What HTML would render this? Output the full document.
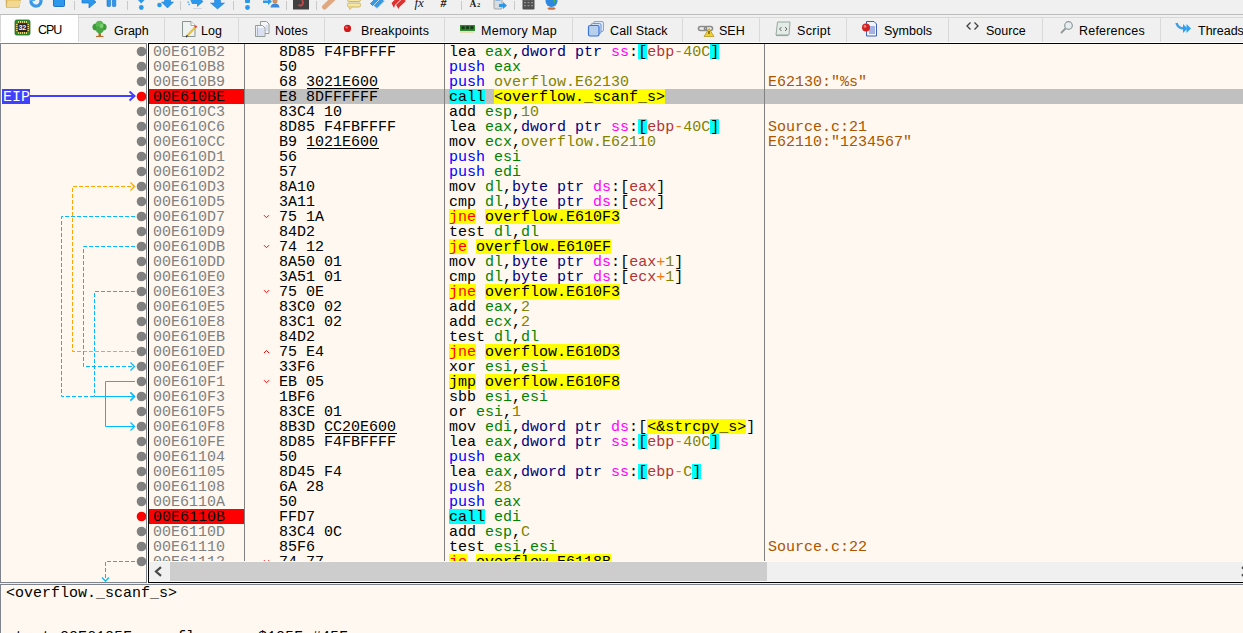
<!DOCTYPE html>
<html><head><meta charset="utf-8">
<style>
*{margin:0;padding:0;box-sizing:border-box}
html,body{width:1243px;height:633px;overflow:hidden;background:#F0F0F0;position:relative;font-family:"Liberation Sans",sans-serif}
.abs{position:absolute}
#tbline{position:absolute;left:0;top:14px;width:1243px;height:1px;background:#BDBDBD}
.sep{position:absolute;top:1px;width:1px;height:9px;background:#C9C9C9}
.tab{position:absolute;top:17px;height:25px;border-top:1px solid #D9D9D9;border-right:1px solid #D9D9D9;background:#F0F0F0;font-size:12.5px;line-height:15px;color:#000;white-space:nowrap}
.tab.cur{top:15px;height:27px;background:#fff;border-top:none;border-left:1px solid #D5D5D5}
.tab span.t{position:absolute;top:6px}
.tab.cur span.t{top:8px;margin-left:-1px}
#tabline{position:absolute;left:0;top:42px;width:1243px;height:1px;background:#fff}
#side{position:absolute;left:0;top:43px;width:147px;height:540px;border:1px solid #7F848C;background:#FFF8F0}
#gap{position:absolute;left:147px;top:43px;width:1px;height:540px;background:#FFFFFF}
#dis{position:absolute;left:148px;top:43px;width:1100px;height:540px;border:1px solid #000;background:#FFF8F0}
#rows{position:absolute;left:149px;top:44px;width:1094px;height:517px;overflow:hidden;font-family:"Liberation Mono",monospace;font-size:15px;line-height:15px;white-space:pre}
.row{position:absolute;left:0;width:1094px;height:15px}
.row.sel::before{content:"";position:absolute;left:96px;top:0;width:1000px;height:15px;background:#C0C0C0}
.bpbg{position:absolute;left:0;top:0;width:95px;height:15px;background:#FF0000}
.ad{position:absolute;left:4px;top:1px;color:#808080}
.by{position:absolute;left:130px;top:1px;color:#000}
.ja{position:absolute;left:114px;top:5px}
.ds{position:absolute;left:300px;top:1px}
.cm{position:absolute;left:619px;top:1px;color:#AA5500}
.bg{position:absolute;top:0;height:15px}
.ul{position:absolute;top:14px;height:1px;background:#000}
.u{text-decoration:underline;text-underline-offset:2px}
.colsep{position:absolute;top:0;width:1px;height:517px;background:#808080}
.m{color:#000}
.pp{color:#0000FF}
.rg{color:#008300}
.sz{color:#000080}
.sg{color:#FF00FF}
.sb{color:#000}
.bs{color:#B03434}
.op{color:#F27711}
.vl{color:#828200}
.cj{color:#FF0000}
.uj{color:#000}
.ad2{}
.ds .ad{position:static;color:#000}
.cl{color:#000}
.lb{color:#000}
#hscroll{position:absolute;left:149px;top:562px;width:1094px;height:19px;background:#F0F0F0}
#hthumb{position:absolute;left:170px;top:562px;width:597px;height:19px;background:#CDCDCD}
#info{position:absolute;left:0;top:584px;width:1250px;height:60px;border-left:1px solid #7F848C;border-top:1px solid #7F848C;background:#FFF8F0;font-family:"Liberation Mono",monospace;font-size:15px;line-height:15px;white-space:pre;color:#000}
#splitline{position:absolute;left:0;top:583px;width:1243px;height:1px;background:#F0F0F0}
</style></head><body>
<!-- toolbar -->
<div id="toolbar">
<svg class="abs" style="left:0;top:0" width="600" height="14" viewBox="0 0 600 14">
<g fill="#C9C9C9"><rect x="74" y="1" width="1" height="9"/><rect x="127" y="1" width="1" height="9"/><rect x="180" y="1" width="1" height="9"/><rect x="233" y="1" width="1" height="9"/><rect x="286" y="1" width="1" height="9"/><rect x="316" y="1" width="1" height="9"/><rect x="461" y="1" width="1" height="9"/><rect x="514" y="1" width="1" height="9"/></g>
<!-- folder -->
<path d="M6 -2 H20.5 L19 7.5 H6.5 Z" fill="#E8C870" stroke="#C8A048" stroke-width="0.8"/>
<path d="M8 1 H21 L19 7.5 H6.5 Z" fill="#F2D890"/>
<!-- restart -->
<path d="M31 0.5 A5 5 0 1 0 40.5 -1" stroke="#3A98E8" stroke-width="3.2" fill="none"/><circle cx="35.8" cy="2.2" r="1.8" fill="#F0F0F0"/>
<rect x="30" y="-2" width="5" height="3" fill="#50A8F0"/>
<!-- stop -->
<rect x="53.5" y="-5" width="11" height="11.5" rx="1" fill="#2C98EC" stroke="#1E70C8" stroke-width="1"/>
<!-- run -->
<path d="M82 -2 V3 H89 V8 L96 2 L89 -4 V-2 Z" fill="#2A98EC" stroke="#1E70C8" stroke-width="0.7"/>
<!-- pause -->
<rect x="107" y="-4" width="3.5" height="10.5" rx="0.8" fill="#2A98EC" stroke="#1E70C8" stroke-width="0.6"/>
<rect x="112.3" y="-4" width="3.5" height="10.5" rx="0.8" fill="#2A98EC" stroke="#1E70C8" stroke-width="0.6"/>
<!-- step into -->
<path d="M137 -1 H145.5 L141.2 3.5 Z" fill="#2A98EC"/>
<circle cx="141.3" cy="7.5" r="2.4" fill="#2A98EC"/>
<!-- step over -->
<circle cx="159.5" cy="5" r="2.3" fill="#2A98EC"/>
<path d="M164.5 -2 H170.5 V2 H173.5 L167.5 8 L161.5 2 H164.5 Z" fill="#2A98EC" stroke="#1E70C8" stroke-width="0.5"/>
<!-- trace into -->
<path d="M190 -1 H197 V-4 L203.5 1.5 L197 7 V4 H192 Z" fill="#2A98EC"/>
<g fill="#2A98EC"><rect x="187.5" y="1.5" width="1.3" height="1.3"/><rect x="188.5" y="3.8" width="1.3" height="1.3"/></g>
<path d="M193 8.5 H202" stroke="#B8C8D8" stroke-width="1" opacity="0.6"/>
<!-- arrow down -->
<path d="M214.5 -4 H220.5 V3 H224.5 L217.5 9 L210.5 3 H214.5 Z" fill="#2A98EC" stroke="#1E70C8" stroke-width="0.5"/>
<!-- ! -->
<rect x="245" y="-3" width="5" height="6" rx="1" fill="#2A98EC"/>
<circle cx="247.5" cy="7.5" r="2.4" fill="#2A98EC"/>
<!-- arrow + person -->
<path d="M263 0.5 H268 V-2 L272 1.5 L268 5 V3 H263 Z" fill="#2A98EC"/>
<circle cx="275" cy="1" r="2.5" fill="#C89068"/>
<path d="M270.5 7.5 Q271 3.5 275 3.5 Q279 3.5 279.5 7.5 Z" fill="#3A88D8"/>
<!-- dark S -->
<rect x="293" y="-6" width="16" height="15.5" fill="#404040"/>
<path d="M302 0 Q304 3 302 5 Q300 6.5 298.5 4.5" stroke="#C04848" stroke-width="1.8" fill="none"/>
<!-- bandage -->
<path d="M324.5 7 L336 -4" stroke="#E0A880" stroke-width="5" stroke-linecap="round"/>
<!-- comment bubbles -->
<rect x="347.5" y="-2" width="13" height="3.5" rx="1.5" fill="#F4E8A0" stroke="#C8A858" stroke-width="0.8"/>
<rect x="347.5" y="3" width="13" height="4" rx="1.5" fill="#F4E8A0" stroke="#C8A858" stroke-width="0.8"/>
<path d="M350 7 L349.5 9.5 L352.5 7" fill="#F4E8A0" stroke="#C8A858" stroke-width="0.7"/>
<!-- blue tags -->
<path d="M369.5 3.5 L377 -4 L380 -1 L372.5 6.5 Z" fill="#3898E0" stroke="#FFFFFF" stroke-width="0.8"/>
<path d="M373.5 5.5 L381 -2 L384.5 1 L377 8.5 Z" fill="#3898E0" stroke="#D0E0F0" stroke-width="0.8"/>
<!-- red tags -->
<path d="M391.5 3 L398 -3.5 L401 -1 L395 5 L394 8 Z" fill="#E03030"/>
<path d="M396 5 L402.5 -1.5 L406 1 L399.5 7 L398.5 9 Z" fill="#E03030"/>
<!-- fx -->
<text x="414.5" y="7.2" font-family="Liberation Serif" font-style="italic" font-size="13" fill="#1A1A1A">fx</text>
<!-- # -->
<text x="440.5" y="7" font-family="Liberation Serif" font-weight="bold" font-style="italic" font-size="12" fill="#1A1A1A">#</text>
<!-- A2 -->
<text x="469.5" y="6.6" font-family="Liberation Serif" font-weight="bold" font-size="9.5" fill="#1A1A1A">A</text>
<text x="477" y="6.6" font-family="Liberation Serif" font-weight="bold" font-size="6.5" fill="#1A1A1A">2</text>
<!-- phone arrow -->
<rect x="494" y="-5" width="8" height="14" rx="1" fill="#D8DCE0" stroke="#909498" stroke-width="0.8"/>
<rect x="495.5" y="-3" width="5" height="3.5" fill="#3A90E0"/>
<path d="M499 4 H503 V2 L507 5.5 L503 9 V7 H499 Z" fill="#2A98EC"/>
<!-- calculator -->
<rect x="522.5" y="-5" width="12" height="14.5" rx="1" fill="#505050"/>
<g fill="#909090"><rect x="524" y="-1" width="2" height="1.3"/><rect x="527.5" y="-1" width="2" height="1.3"/><rect x="531" y="-1" width="2" height="1.3"/>
<rect x="524" y="2" width="2" height="1.3"/><rect x="527.5" y="2" width="2" height="1.3"/><rect x="531" y="2" width="2" height="1.3"/>
<rect x="524" y="5" width="2" height="1.3"/><rect x="527.5" y="5" width="2" height="1.3"/><rect x="531" y="5" width="2" height="1.3"/></g>
<!-- globe -->
<circle cx="551.5" cy="1" r="6" fill="#2C88E0"/>
<path d="M553 -3 Q556 -1 555 3 Q553 2 553 -3 Z" fill="#40B040"/>
<ellipse cx="551.5" cy="8.5" rx="4" ry="1.3" fill="#C87040"/>
</svg>
</div>
<div id="tbline"></div>
<!-- tabs -->
<div class="tab cur" style="left:0px;width:79px"><span class="t" style="left:38px;letter-spacing:-1px">CPU</span></div>
<div class="tab" style="left:79px;width:86px"><span class="t" style="left:35px">Graph</span></div>
<div class="tab" style="left:165px;width:74px"><span class="t" style="left:36px">Log</span></div>
<div class="tab" style="left:239px;width:86px"><span class="t" style="left:36px">Notes</span></div>
<div class="tab" style="left:325px;width:120px"><span class="t" style="left:36px;letter-spacing:0.2px">Breakpoints</span></div>
<div class="tab" style="left:445px;width:128px"><span class="t" style="left:36px;letter-spacing:0.3px">Memory Map</span></div>
<div class="tab" style="left:573px;width:110px"><span class="t" style="left:37px;letter-spacing:0.15px">Call Stack</span></div>
<div class="tab" style="left:683px;width:77px"><span class="t" style="left:36px">SEH</span></div>
<div class="tab" style="left:760px;width:87px"><span class="t" style="left:37px;letter-spacing:0.3px">Script</span></div>
<div class="tab" style="left:847px;width:102px"><span class="t" style="left:37px">Symbols</span></div>
<div class="tab" style="left:949px;width:94px"><span class="t" style="left:37px">Source</span></div>
<div class="tab" style="left:1043px;width:118px"><span class="t" style="left:36px;letter-spacing:0.2px">References</span></div>
<div class="tab" style="left:1161px;width:140px"><span class="t" style="left:37px">Threads</span></div>

<svg class="abs" style="left:0;top:15px" width="1243" height="27" viewBox="0 15 1243 27">
<!-- CPU chip -->
<rect x="15" y="20" width="15" height="15" rx="1.5" fill="#2E8B2E" stroke="#1F6A1F" stroke-width="0.8"/>
<g fill="#E8D070"><rect x="18" y="21" width="1" height="2"/><rect x="20" y="21" width="1" height="2"/><rect x="22" y="21" width="1" height="2"/><rect x="24" y="21" width="1" height="2"/><rect x="26" y="21" width="1" height="2"/>
<rect x="18" y="32" width="1" height="2"/><rect x="20" y="32" width="1" height="2"/><rect x="22" y="32" width="1" height="2"/><rect x="24" y="32" width="1" height="2"/><rect x="26" y="32" width="1" height="2"/>
<rect x="16" y="24" width="2" height="1"/><rect x="16" y="26" width="2" height="1"/><rect x="16" y="28" width="2" height="1"/><rect x="16" y="30" width="2" height="1"/>
<rect x="27" y="24" width="2" height="1"/><rect x="27" y="26" width="2" height="1"/><rect x="27" y="28" width="2" height="1"/><rect x="27" y="30" width="2" height="1"/></g>
<rect x="17.8" y="23.2" width="9.6" height="8.8" rx="1.2" fill="#262626"/>
<text x="18.6" y="30.4" font-family="Liberation Sans" font-weight="bold" font-size="7.2" fill="#F4F4F4" letter-spacing="-0.3">32</text>
<!-- tree -->
<rect x="98.5" y="31" width="2.5" height="5" fill="#B07030"/>
<path d="M96 36.5 H103.5" stroke="#B07030" stroke-width="1.2"/>
<circle cx="96" cy="27" r="3.6" fill="#3E9A3A"/><circle cx="103" cy="27" r="3.6" fill="#3E9A3A"/><circle cx="99.5" cy="24.5" r="3.8" fill="#58B850"/><circle cx="99.8" cy="29.5" r="3.8" fill="#4AA844"/><circle cx="101.5" cy="26" r="2" fill="#7CD070"/>
<!-- log page + pencil -->
<path d="M182.5 21.5 H191 L195 25.5 V36.5 H182.5 Z" fill="#EEF3F2" stroke="#8A9590" stroke-width="1"/>
<path d="M191 21.5 V25.5 H195" fill="#fff" stroke="#8A9590" stroke-width="0.8"/>
<path d="M186.5 36.5 L195.5 27" stroke="#E8C040" stroke-width="2.2"/>
<path d="M195 27.5 L196.5 26" stroke="#E04040" stroke-width="2.2"/>
<path d="M186 37 L187.5 35.5" stroke="#222" stroke-width="1.2"/>
<!-- notes -->
<path d="M260.5 21.5 H266.5 L269 24 V33.5 H260.5 Z" fill="#F4F6FA" stroke="#8A9590" stroke-width="0.9"/>
<path d="M255.5 25.5 H262.5 L265 28 V36.5 H255.5 Z" fill="#F4F6FA" stroke="#8A9590" stroke-width="0.9"/>
<g stroke="#A8B8E0" stroke-width="0.7"><path d="M256.5 29 H264"/><path d="M256.5 31 H264"/><path d="M256.5 33 H264"/><path d="M256.5 35 H264"/><path d="M265.5 26 H268"/><path d="M265.5 28 H268"/><path d="M265.5 30 H268"/></g>
<path d="M257.5 26 V36" stroke="#E08080" stroke-width="0.6"/>
<!-- bp dot -->
<circle cx="347.5" cy="28.4" r="3.6" fill="#D01818"/>
<circle cx="346.6" cy="27.4" r="1.2" fill="#F07070"/>
<!-- memory map -->
<rect x="460" y="25" width="15" height="6" fill="#2E8B2E"/>
<rect x="461.5" y="26.2" width="3.2" height="3" fill="#1A3A1A"/><rect x="465.9" y="26.2" width="3.2" height="3" fill="#1A3A1A"/><rect x="470.3" y="26.2" width="3.2" height="3" fill="#1A3A1A"/>
<path d="M460.5 32 H474.5" stroke="#D8C060" stroke-width="1.6" stroke-dasharray="1 1"/>
<!-- call stack -->
<rect x="593.5" y="21.5" width="10" height="10" rx="1.5" fill="#DCE8F6" stroke="#88A8D8" stroke-width="1"/>
<rect x="591" y="23.5" width="10" height="10" rx="1.5" fill="#D0E0F4" stroke="#7098D0" stroke-width="1"/>
<rect x="588.5" y="25.5" width="10.5" height="10.5" rx="1.5" fill="#B8D0EE" stroke="#3C74D8" stroke-width="1.2"/>
<!-- SEH -->
<rect x="698.5" y="26.5" width="8" height="4" rx="2" fill="none" stroke="#8A8A8A" stroke-width="1.6"/>
<rect x="704.5" y="26.5" width="8" height="4" rx="2" fill="none" stroke="#8A8A8A" stroke-width="1.6"/>
<path d="M709 28.5 L714 36.5 H704 Z" fill="#F0D030" stroke="#B09020" stroke-width="0.7"/>
<path d="M709 31 V34" stroke="#222" stroke-width="1"/>
<!-- script -->
<path d="M777.5 22 H790 L789 35 H776 Z" fill="#E4ECE8" stroke="#98A8A0" stroke-width="1"/>
<path d="M776 35.5 H788" stroke="#98A8A0" stroke-width="1.2"/>
<path d="M781.5 27 L779.5 29 L781.5 31 M785 27 L787 29 L785 31" stroke="#555" stroke-width="0.9" fill="none"/>
<!-- symbols -->
<path d="M866.5 21.5 H874 L876.5 24 V36 H866.5 Z" fill="#F0F4FC" stroke="#4060B0" stroke-width="1"/>
<g stroke="#3050C0" stroke-width="0.8"><path d="M869 27 H875"/><path d="M869 29 H875"/><path d="M869 31 H875"/><path d="M869 33 H875"/></g>
<circle cx="866" cy="27.6" r="4" fill="#D02020"/><circle cx="865" cy="26.4" r="1.4" fill="#F08080"/>
<!-- source <> -->
<path d="M970.5 22.5 L967 26 L970.5 29.5 M974.5 22.5 L978 26 L974.5 29.5" stroke="#404040" stroke-width="1.3" fill="none"/>
<!-- references magnifier -->
<circle cx="1068.5" cy="25.5" r="3.8" fill="#E6EEF4" stroke="#909898" stroke-width="1.2"/>
<path d="M1065.5 28.5 L1061 33" stroke="#909898" stroke-width="1.8"/>
<!-- threads -->
<path d="M1176.5 23 Q1178 28.5 1184 28.5" stroke="#40A0E8" stroke-width="2.6" fill="none"/>
<path d="M1183 24 L1187.5 28.5 L1183 33 Z" fill="#30A0F0"/>
<path d="M1186.5 24 L1191 28.5 L1186.5 33 Z" fill="#30A0F0"/>
</svg>

<div id="tabline"></div>
<!-- side bar -->
<div id="side"></div>
<div id="gap"></div>
<svg class="abs" style="left:0;top:0" width="147" height="583" viewBox="0 0 147 583">
<defs><clipPath id="sc"><rect x="1" y="44" width="145" height="538"/></clipPath></defs>
<g clip-path="url(#sc)">
<path d="M135 351.5 H72.5 V186.5 H135" stroke="#FFA500" stroke-width="1" fill="none" stroke-dasharray="4 2"/>
<path d="M130.5 182.5 L134.5 186.5 L130.5 190.5" stroke="#FFA500" stroke-width="1.3" fill="none"/>
<path d="M135 216.5 H61.5 V396.5 H135" stroke="#00BBFF" stroke-width="1" fill="none" stroke-dasharray="4 2"/>
<path d="M130.5 392.5 L134.5 396.5 L130.5 400.5" stroke="#00BBFF" stroke-width="1.3" fill="none"/>
<path d="M135 246.5 H83.5 V366.5 H135" stroke="#00BBFF" stroke-width="1" fill="none" stroke-dasharray="4 2"/>
<path d="M130.5 362.5 L134.5 366.5 L130.5 370.5" stroke="#00BBFF" stroke-width="1.3" fill="none"/>
<path d="M135 291.5 H94.5 V396.5 H135" stroke="#00BBFF" stroke-width="1" fill="none" stroke-dasharray="4 2"/>
<path d="M130.5 392.5 L134.5 396.5 L130.5 400.5" stroke="#00BBFF" stroke-width="1.3" fill="none"/>
<path d="M135 381.5 H105.5 V426.5 H135" stroke="#00BBFF" stroke-width="1" fill="none"/>
<path d="M130.5 422.5 L134.5 426.5 L130.5 430.5" stroke="#00BBFF" stroke-width="1.3" fill="none"/>
<path d="M135 561.5 H105.5 V581" stroke="#00BBFF" stroke-width="1" fill="none" stroke-dasharray="4 2"/>
<path d="M102 577.5 L105.5 581 L109 577.5" stroke="#00BBFF" stroke-width="1.3" fill="none"/>
<rect x="2" y="89" width="28" height="15" fill="#4040FF"/>
<text x="3" y="101" font-family="Liberation Mono" font-size="15" fill="#fff">EIP</text>
<path d="M30 96 H134" stroke="#4040FF" stroke-width="2" fill="none"/>
<path d="M129.5 91.5 L134.5 96 L129.5 100.5" stroke="#4040FF" stroke-width="2" fill="none"/>
<circle cx="141.5" cy="51.5" r="4.8" fill="#808080"/>
<circle cx="141.5" cy="66.5" r="4.8" fill="#808080"/>
<circle cx="141.5" cy="81.5" r="4.8" fill="#808080"/>
<circle cx="141.5" cy="96.5" r="4.8" fill="#ff0000"/>
<circle cx="141.5" cy="111.5" r="4.8" fill="#808080"/>
<circle cx="141.5" cy="126.5" r="4.8" fill="#808080"/>
<circle cx="141.5" cy="141.5" r="4.8" fill="#808080"/>
<circle cx="141.5" cy="156.5" r="4.8" fill="#808080"/>
<circle cx="141.5" cy="171.5" r="4.8" fill="#808080"/>
<circle cx="141.5" cy="186.5" r="4.8" fill="#808080"/>
<circle cx="141.5" cy="201.5" r="4.8" fill="#808080"/>
<circle cx="141.5" cy="216.5" r="4.8" fill="#808080"/>
<circle cx="141.5" cy="231.5" r="4.8" fill="#808080"/>
<circle cx="141.5" cy="246.5" r="4.8" fill="#808080"/>
<circle cx="141.5" cy="261.5" r="4.8" fill="#808080"/>
<circle cx="141.5" cy="276.5" r="4.8" fill="#808080"/>
<circle cx="141.5" cy="291.5" r="4.8" fill="#808080"/>
<circle cx="141.5" cy="306.5" r="4.8" fill="#808080"/>
<circle cx="141.5" cy="321.5" r="4.8" fill="#808080"/>
<circle cx="141.5" cy="336.5" r="4.8" fill="#808080"/>
<circle cx="141.5" cy="351.5" r="4.8" fill="#808080"/>
<circle cx="141.5" cy="366.5" r="4.8" fill="#808080"/>
<circle cx="141.5" cy="381.5" r="4.8" fill="#808080"/>
<circle cx="141.5" cy="396.5" r="4.8" fill="#808080"/>
<circle cx="141.5" cy="411.5" r="4.8" fill="#808080"/>
<circle cx="141.5" cy="426.5" r="4.8" fill="#808080"/>
<circle cx="141.5" cy="441.5" r="4.8" fill="#808080"/>
<circle cx="141.5" cy="456.5" r="4.8" fill="#808080"/>
<circle cx="141.5" cy="471.5" r="4.8" fill="#808080"/>
<circle cx="141.5" cy="486.5" r="4.8" fill="#808080"/>
<circle cx="141.5" cy="501.5" r="4.8" fill="#808080"/>
<circle cx="141.5" cy="516.5" r="4.8" fill="#ff0000"/>
<circle cx="141.5" cy="531.5" r="4.8" fill="#808080"/>
<circle cx="141.5" cy="546.5" r="4.8" fill="#808080"/>
<circle cx="141.5" cy="561.5" r="4.8" fill="#808080"/>
</g>
</svg>
<!-- disasm -->
<div id="dis"></div>
<div id="rows">
<div class="row" style="top:0px"><div class="bg" style="left:489px;width:9px;background:#00FFFF"></div><div class="bg" style="left:561px;width:9px;background:#00FFFF"></div><div class="ad" style="">00E610B2</div><div class="by">8D85 F4FBFFFF</div><div class="ds"><span class="m">lea</span> <span class="rg">eax</span><span class="m">,</span><span class="sz">dword ptr</span> <span class="sg">ss</span><span class="m">:</span><span class="sb">[</span><span class="bs">ebp</span><span class="op">-</span><span class="vl">40C</span><span class="sb">]</span></div></div>
<div class="row" style="top:15px"><div class="ad" style="">00E610B8</div><div class="by">50</div><div class="ds"><span class="pp">push</span> <span class="rg">eax</span></div></div>
<div class="row" style="top:30px"><div class="ul" style="left:158px;width:72px"></div><div class="ad" style="">00E610B9</div><div class="by">68 3021E600</div><div class="ds"><span class="pp">push</span> <span class="vl">overflow.E62130</span></div><div class="cm">E62130:"%s"</div></div>
<div class="row sel" style="top:45px"><div class="bpbg"></div><div class="bg" style="left:300px;width:36px;background:#00FFFF"></div><div class="bg" style="left:345px;width:171px;background:#FFFF00"></div><div class="ad" style="color:#000">00E610BE</div><div class="by">E8 8DFFFFFF</div><div class="ds"><span class="cl">call</span> <span class="lb">&lt;overflow._scanf_s&gt;</span></div></div>
<div class="row" style="top:60px"><div class="ad" style="">00E610C3</div><div class="by">83C4 10</div><div class="ds"><span class="m">add</span> <span class="rg">esp</span><span class="m">,</span><span class="vl">10</span></div></div>
<div class="row" style="top:75px"><div class="bg" style="left:489px;width:9px;background:#00FFFF"></div><div class="bg" style="left:561px;width:9px;background:#00FFFF"></div><div class="ad" style="">00E610C6</div><div class="by">8D85 F4FBFFFF</div><div class="ds"><span class="m">lea</span> <span class="rg">eax</span><span class="m">,</span><span class="sz">dword ptr</span> <span class="sg">ss</span><span class="m">:</span><span class="sb">[</span><span class="bs">ebp</span><span class="op">-</span><span class="vl">40C</span><span class="sb">]</span></div><div class="cm">Source.c:21</div></div>
<div class="row" style="top:90px"><div class="ul" style="left:158px;width:72px"></div><div class="ad" style="">00E610CC</div><div class="by">B9 1021E600</div><div class="ds"><span class="m">mov</span> <span class="rg">ecx</span><span class="m">,</span><span class="vl">overflow.E62110</span></div><div class="cm">E62110:"1234567"</div></div>
<div class="row" style="top:105px"><div class="ad" style="">00E610D1</div><div class="by">56</div><div class="ds"><span class="pp">push</span> <span class="rg">esi</span></div></div>
<div class="row" style="top:120px"><div class="ad" style="">00E610D2</div><div class="by">57</div><div class="ds"><span class="pp">push</span> <span class="rg">edi</span></div></div>
<div class="row" style="top:135px"><div class="ad" style="">00E610D3</div><div class="by">8A10</div><div class="ds"><span class="m">mov</span> <span class="rg">dl</span><span class="m">,</span><span class="sz">byte ptr</span> <span class="sg">ds</span><span class="m">:</span><span class="m">[</span><span class="bs">eax</span><span class="m">]</span></div></div>
<div class="row" style="top:150px"><div class="ad" style="">00E610D5</div><div class="by">3A11</div><div class="ds"><span class="m">cmp</span> <span class="rg">dl</span><span class="m">,</span><span class="sz">byte ptr</span> <span class="sg">ds</span><span class="m">:</span><span class="m">[</span><span class="bs">ecx</span><span class="m">]</span></div></div>
<div class="row" style="top:165px"><div class="bg" style="left:300px;width:27px;background:#FFFF00"></div><div class="bg" style="left:336px;width:135px;background:#FFFF00"></div><div class="ad" style="">00E610D7</div><svg class="ja" width="8" height="6" viewBox="0 0 8 6"><path d="M1 1.2 L3.5 3.7 L6 1.2" stroke="#f00" stroke-width="1" fill="none"/></svg><div class="by">75 1A</div><div class="ds"><span class="cj">jne</span> <span class="ad">overflow.E610F3</span></div></div>
<div class="row" style="top:180px"><div class="ad" style="">00E610D9</div><div class="by">84D2</div><div class="ds"><span class="m">test</span> <span class="rg">dl</span><span class="m">,</span><span class="rg">dl</span></div></div>
<div class="row" style="top:195px"><div class="bg" style="left:300px;width:18px;background:#FFFF00"></div><div class="bg" style="left:327px;width:135px;background:#FFFF00"></div><div class="ad" style="">00E610DB</div><svg class="ja" width="8" height="6" viewBox="0 0 8 6"><path d="M1 1.2 L3.5 3.7 L6 1.2" stroke="#f00" stroke-width="1" fill="none"/></svg><div class="by">74 12</div><div class="ds"><span class="cj">je</span> <span class="ad">overflow.E610EF</span></div></div>
<div class="row" style="top:210px"><div class="ad" style="">00E610DD</div><div class="by">8A50 01</div><div class="ds"><span class="m">mov</span> <span class="rg">dl</span><span class="m">,</span><span class="sz">byte ptr</span> <span class="sg">ds</span><span class="m">:</span><span class="m">[</span><span class="bs">eax</span><span class="op">+</span><span class="vl">1</span><span class="m">]</span></div></div>
<div class="row" style="top:225px"><div class="ad" style="">00E610E0</div><div class="by">3A51 01</div><div class="ds"><span class="m">cmp</span> <span class="rg">dl</span><span class="m">,</span><span class="sz">byte ptr</span> <span class="sg">ds</span><span class="m">:</span><span class="m">[</span><span class="bs">ecx</span><span class="op">+</span><span class="vl">1</span><span class="m">]</span></div></div>
<div class="row" style="top:240px"><div class="bg" style="left:300px;width:27px;background:#FFFF00"></div><div class="bg" style="left:336px;width:135px;background:#FFFF00"></div><div class="ad" style="">00E610E3</div><svg class="ja" width="8" height="6" viewBox="0 0 8 6"><path d="M1 1.2 L3.5 3.7 L6 1.2" stroke="#f00" stroke-width="1" fill="none"/></svg><div class="by">75 0E</div><div class="ds"><span class="cj">jne</span> <span class="ad">overflow.E610F3</span></div></div>
<div class="row" style="top:255px"><div class="ad" style="">00E610E5</div><div class="by">83C0 02</div><div class="ds"><span class="m">add</span> <span class="rg">eax</span><span class="m">,</span><span class="vl">2</span></div></div>
<div class="row" style="top:270px"><div class="ad" style="">00E610E8</div><div class="by">83C1 02</div><div class="ds"><span class="m">add</span> <span class="rg">ecx</span><span class="m">,</span><span class="vl">2</span></div></div>
<div class="row" style="top:285px"><div class="ad" style="">00E610EB</div><div class="by">84D2</div><div class="ds"><span class="m">test</span> <span class="rg">dl</span><span class="m">,</span><span class="rg">dl</span></div></div>
<div class="row" style="top:300px"><div class="bg" style="left:300px;width:27px;background:#FFFF00"></div><div class="bg" style="left:336px;width:135px;background:#FFFF00"></div><div class="ad" style="">00E610ED</div><svg class="ja" width="8" height="6" viewBox="0 0 8 6"><path d="M1 4 L3.5 1.5 L6 4" stroke="#f00" stroke-width="1" fill="none"/></svg><div class="by">75 E4</div><div class="ds"><span class="cj">jne</span> <span class="ad">overflow.E610D3</span></div></div>
<div class="row" style="top:315px"><div class="ad" style="">00E610EF</div><div class="by">33F6</div><div class="ds"><span class="m">xor</span> <span class="rg">esi</span><span class="m">,</span><span class="rg">esi</span></div></div>
<div class="row" style="top:330px"><div class="bg" style="left:300px;width:27px;background:#FFFF00"></div><div class="bg" style="left:336px;width:135px;background:#FFFF00"></div><div class="ad" style="">00E610F1</div><svg class="ja" width="8" height="6" viewBox="0 0 8 6"><path d="M1 1.2 L3.5 3.7 L6 1.2" stroke="#f00" stroke-width="1" fill="none"/></svg><div class="by">EB 05</div><div class="ds"><span class="uj">jmp</span> <span class="ad">overflow.E610F8</span></div></div>
<div class="row" style="top:345px"><div class="ad" style="">00E610F3</div><div class="by">1BF6</div><div class="ds"><span class="m">sbb</span> <span class="rg">esi</span><span class="m">,</span><span class="rg">esi</span></div></div>
<div class="row" style="top:360px"><div class="ad" style="">00E610F5</div><div class="by">83CE 01</div><div class="ds"><span class="m">or</span> <span class="rg">esi</span><span class="m">,</span><span class="vl">1</span></div></div>
<div class="row" style="top:375px"><div class="bg" style="left:498px;width:99px;background:#FFFF00"></div><div class="ul" style="left:176px;width:72px"></div><div class="ad" style="">00E610F8</div><div class="by">8B3D CC20E600</div><div class="ds"><span class="m">mov</span> <span class="rg">edi</span><span class="m">,</span><span class="sz">dword ptr</span> <span class="sg">ds</span><span class="m">:</span><span class="m">[</span><span class="lb">&lt;&amp;strcpy_s&gt;</span><span class="m">]</span></div></div>
<div class="row" style="top:390px"><div class="bg" style="left:489px;width:9px;background:#00FFFF"></div><div class="bg" style="left:561px;width:9px;background:#00FFFF"></div><div class="ad" style="">00E610FE</div><div class="by">8D85 F4FBFFFF</div><div class="ds"><span class="m">lea</span> <span class="rg">eax</span><span class="m">,</span><span class="sz">dword ptr</span> <span class="sg">ss</span><span class="m">:</span><span class="sb">[</span><span class="bs">ebp</span><span class="op">-</span><span class="vl">40C</span><span class="sb">]</span></div></div>
<div class="row" style="top:405px"><div class="ad" style="">00E61104</div><div class="by">50</div><div class="ds"><span class="pp">push</span> <span class="rg">eax</span></div></div>
<div class="row" style="top:420px"><div class="bg" style="left:489px;width:9px;background:#00FFFF"></div><div class="bg" style="left:543px;width:9px;background:#00FFFF"></div><div class="ad" style="">00E61105</div><div class="by">8D45 F4</div><div class="ds"><span class="m">lea</span> <span class="rg">eax</span><span class="m">,</span><span class="sz">dword ptr</span> <span class="sg">ss</span><span class="m">:</span><span class="sb">[</span><span class="bs">ebp</span><span class="op">-</span><span class="vl">C</span><span class="sb">]</span></div></div>
<div class="row" style="top:435px"><div class="ad" style="">00E61108</div><div class="by">6A 28</div><div class="ds"><span class="pp">push</span> <span class="vl">28</span></div></div>
<div class="row" style="top:450px"><div class="ad" style="">00E6110A</div><div class="by">50</div><div class="ds"><span class="pp">push</span> <span class="rg">eax</span></div></div>
<div class="row" style="top:465px"><div class="bpbg"></div><div class="bg" style="left:300px;width:36px;background:#00FFFF"></div><div class="ad" style="color:#000">00E6110B</div><div class="by">FFD7</div><div class="ds"><span class="cl">call</span> <span class="rg">edi</span></div></div>
<div class="row" style="top:480px"><div class="ad" style="">00E6110D</div><div class="by">83C4 0C</div><div class="ds"><span class="m">add</span> <span class="rg">esp</span><span class="m">,</span><span class="vl">C</span></div></div>
<div class="row" style="top:495px"><div class="ad" style="">00E61110</div><div class="by">85F6</div><div class="ds"><span class="m">test</span> <span class="rg">esi</span><span class="m">,</span><span class="rg">esi</span></div><div class="cm">Source.c:22</div></div>
<div class="row" style="top:510px"><div class="bg" style="left:300px;width:18px;background:#FFFF00"></div><div class="bg" style="left:327px;width:135px;background:#FFFF00"></div><div class="ad" style="">00E61112</div><svg class="ja" width="8" height="6" viewBox="0 0 8 6"><path d="M1 1.2 L3.5 3.7 L6 1.2" stroke="#f00" stroke-width="1" fill="none"/></svg><div class="by">74 77</div><div class="ds"><span class="cj">je</span> <span class="ad">overflow.E6118B</span></div></div>
<div class="colsep" style="left:95px"></div>
<div class="colsep" style="left:295px"></div>
<div class="colsep" style="left:615px"></div>
</div>
<div class="abs" style="left:149px;top:561px;width:1094px;height:1px;background:#FDFBF8"></div>
<div id="hscroll"></div>
<div id="hthumb"></div>
<svg class="abs" style="left:149px;top:562px" width="21" height="19" viewBox="0 0 21 19"><path d="M12 5.2 L7 9.5 L12 13.8" stroke="#484848" stroke-width="2.2" fill="none"/></svg>
<svg class="abs" style="left:1237px;top:562px" width="7" height="19" viewBox="0 0 7 19"><path d="M5 5.2 L10 9.5 L5 13.8" stroke="#484848" stroke-width="2.2" fill="none"/></svg>
<div id="splitline"></div>
<div id="info"><div class="abs" style="left:5px;top:1px">&lt;overflow._scanf_s&gt;</div><div class="abs" style="left:5px;top:45px">.text:00E6105F overflow.exe:$105F #45F</div></div>
</body></html>
